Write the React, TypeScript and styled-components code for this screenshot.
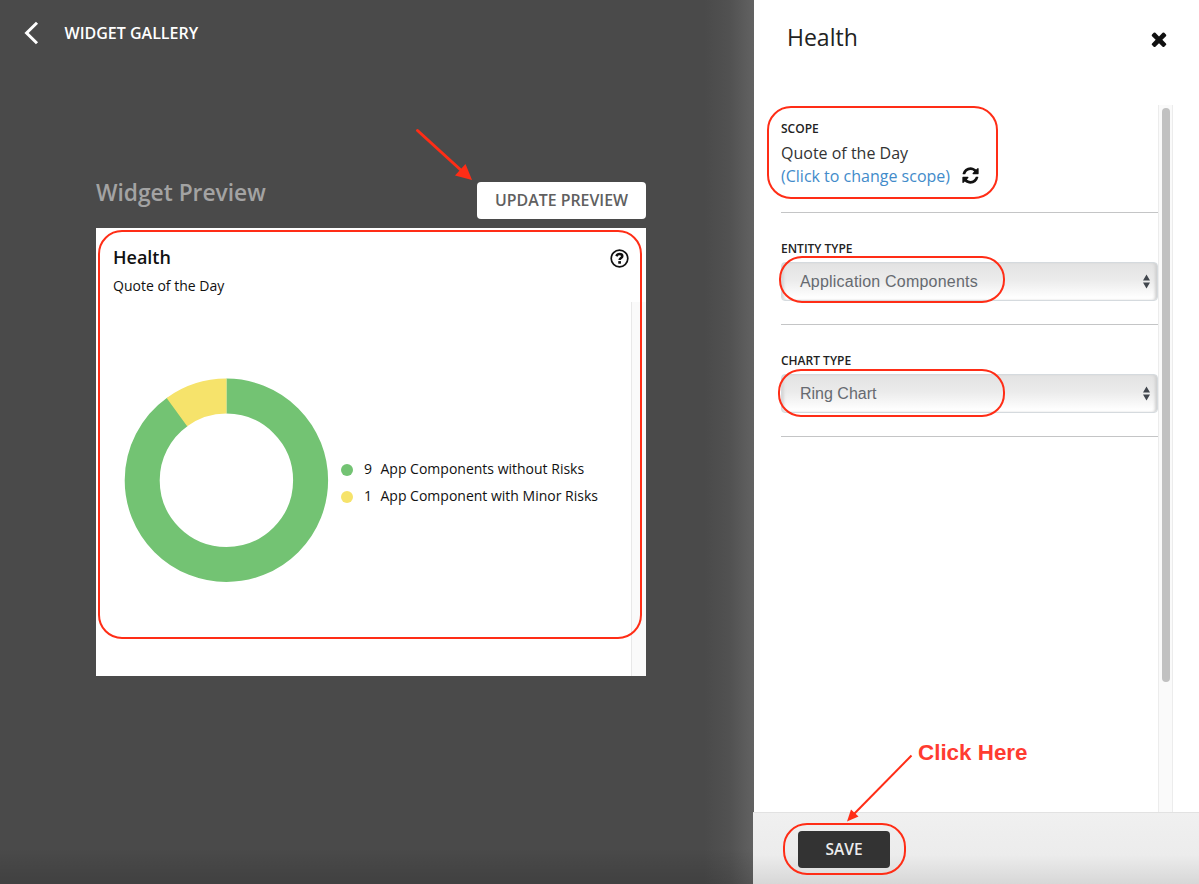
import React from "react";
import styled, { createGlobalStyle } from "styled-components";

const RED = "#ff2d16";

const Global = createGlobalStyle`
  *, *::before, *::after { box-sizing: border-box; }
  body { margin: 0; font-family: "Open Sans", "Noto Sans", sans-serif; color: #111; }
  button { font-family: inherit; cursor: pointer; }
`;

const Page = styled.div`
  position: relative;
  display: flex;
  width: 1199px;
  height: 884px;
  overflow: hidden;
  background: #4a4a4a;
`;

const Stage = styled.main`
  width: 754px;
  height: 884px;
  background:
    linear-gradient(rgba(0, 0, 0, 0) 848px, rgba(0, 0, 0, 0.13) 884px),
    linear-gradient(to right, rgba(104, 104, 104, 0) 704px, rgba(104, 104, 104, 0.25) 730px, rgba(104, 104, 104, 0.8) 754px),
    #4a4a4a;
`;

const TopBar = styled.header`
  display: flex;
  align-items: center;
  height: 66px;
  padding-left: 24px;
`;

const TopTitle = styled.h1`
  margin: 0 0 0 25.5px;
  color: #fff;
  font-size: 16px;
  font-weight: 600;
  line-height: 22px;
  white-space: nowrap;
`;

const Preview = styled.section`
  width: 550px;
  margin: 116px 0 0 96px;
`;

const PreviewHead = styled.div`
  display: flex;
  justify-content: space-between;
  height: 46px;
`;

const PreviewTitle = styled.h2`
  margin: 0;
  color: #a3a3a3;
  font-size: 22.75px;
  font-weight: 600;
  line-height: 22px;
  white-space: nowrap;
`;

const UpdateButton = styled.button`
  width: 169px;
  height: 37px;
  padding: 0 0 2px;
  border: 0;
  border-radius: 4px;
  background: #fff;
  color: #606060;
  font-size: 15.9px;
  font-weight: 600;
  white-space: nowrap;
`;

const Card = styled.article`
  display: flex;
  flex-direction: column;
  height: 448px;
  background: #fff;
`;

const CardHead = styled.div`
  display: flex;
  justify-content: space-between;
  height: 74px;
  padding: 16px 17px 0;
`;

const CardTitle = styled.h3`
  margin: 0;
  font-size: 18px;
  font-weight: 600;
  line-height: 26px;
`;

const CardSubtitle = styled.div`
  margin-top: 6px;
  font-size: 14px;
  line-height: 20px;
`;

const HelpIcon = styled.svg`
  margin-top: 5px;
`;

const CardBody = styled.div`
  display: flex;
  flex: 1;
`;

const ChartArea = styled.div`
  display: flex;
  flex: 1;
  align-items: flex-start;
  padding: 76px 0 0 28px;
`;

const Legend = styled.ul`
  margin: 77px 0 0 11px;
  padding: 0;
  list-style: none;
`;

const LegendRow = styled.li`
  display: flex;
  align-items: center;
  height: 27px;
  font-size: 14px;
  white-space: nowrap;
`;

const Dot = styled.span<{ $color: string }>`
  width: 12px;
  height: 12px;
  margin: 2px 11px 0 1px;
  border-radius: 50%;
  background: ${(p) => p.$color};
`;

const Count = styled.span`
  width: 16.5px;
`;

const CardTrack = styled.div`
  width: 15px;
  border-left: 1px solid #e8e8e8;
  background: #fafafa;
`;

const Panel = styled.aside`
  display: flex;
  flex-direction: column;
  width: 445px;
  height: 884px;
  background: #fff;
`;

const PanelHead = styled.div`
  display: flex;
  justify-content: space-between;
  height: 105px;
  padding: 21px 29px 0 33px;
`;

const PanelTitle = styled.h2`
  margin: 0;
  color: #222;
  font-size: 23px;
  font-weight: 400;
  line-height: 32px;
`;

const CloseIcon = styled.svg`
  margin-top: 6.5px;
`;

const PanelBody = styled.div`
  display: flex;
  flex: 1;
  padding: 0 26px 0 27px;
`;

const Form = styled.div`
  flex: 1;
`;

const Group = styled.section<{ $height: number; $top: number }>`
  height: ${(p) => p.$height}px;
  padding-top: ${(p) => p.$top}px;
  border-bottom: 1px solid #c4c5c6;
`;

const Label = styled.div`
  color: #222;
  font-size: 12px;
  font-weight: 600;
  line-height: 16px;
`;

const ScopeName = styled.div`
  margin-top: 5px;
  color: #333;
  font-size: 16px;
  line-height: 23px;
`;

const ScopeLink = styled.a`
  display: flex;
  align-items: center;
  gap: 11px;
  height: 22px;
  color: #428bca;
  font-size: 16px;
  white-space: nowrap;
`;

const RefreshIcon = styled.svg`
  margin-bottom: 2px;
`;

const SelectBox = styled.div`
  display: flex;
  align-items: center;
  justify-content: space-between;
  height: 39px;
  margin-top: 5px;
  padding: 0 7px 0 18px;
  border: 1px solid #d5dade;
  border-radius: 4px;
  background: linear-gradient(#e3e3e3, #ebebeb 45%, #fff 95%);
  box-shadow: inset -3px 0 3px -1px #cfcfcf, inset 3px 0 3px -1px #d6d6d6;
  color: #666a70;
  font-family: "Liberation Sans", Arial, sans-serif;
  font-size: 16px;
`;

const SelectText = styled.span<{ $spacing: number }>`
  letter-spacing: ${(p) => p.$spacing}px;
`;

const Track = styled.div`
  width: 15px;
  padding: 3px 3px 0 3px;
  border: solid #ececec;
  border-width: 0 1px;
  background: #fafafa;
`;

const Thumb = styled.div`
  width: 8px;
  height: 574px;
  border-radius: 4px;
  background: #c1c1c1;
`;

const Footer = styled.footer`
  height: 72px;
  margin-left: -1px;
  padding: 18px 0 0 45px;
  border-top: 1px solid #e2e2e2;
  background: linear-gradient(#f0f0f0 0, #ececec 42px, #d7d7d7 100%);
`;

const SaveButton = styled.button`
  display: block;
  width: 92px;
  height: 37px;
  padding: 0 0 2px;
  border: 0;
  border-radius: 4px;
  background: #333;
  color: #ececec;
  font-size: 15.5px;
  font-weight: 600;
`;

const Outline = styled.div<{ $x: number; $y: number; $w: number; $h: number; $r: number }>`
  position: absolute;
  left: ${(p) => p.$x}px;
  top: ${(p) => p.$y}px;
  width: ${(p) => p.$w}px;
  height: ${(p) => p.$h}px;
  border: 2px solid ${RED};
  border-radius: ${(p) => p.$r}px;
  pointer-events: none;
`;

const Arrows = styled.svg`
  position: absolute;
  left: 0;
  top: 0;
  pointer-events: none;
`;

const Callout = styled.div`
  position: absolute;
  left: 918px;
  top: 739px;
  color: #ff3b30;
  font-family: "Liberation Sans", Arial, sans-serif;
  font-size: 22.4px;
  font-weight: 700;
  line-height: 28px;
  white-space: nowrap;
`;

const items = [
  { color: "#73c373", count: 9, label: "App Components without Risks" },
  { color: "#f6e36b", count: 1, label: "App Component with Minor Risks" },
];

function Ring() {
  const total = items.reduce((sum, i) => sum + i.count, 0);
  const radius = 84.2;
  const length = 2 * Math.PI * radius;
  let start = 0;
  return (
    <svg width="205" height="205" viewBox="-102.4 -102.3 205 205">
      {items.map((i) => {
        const part = i.count / total;
        const turn = start * 360 - 90;
        start += part;
        return (
          <circle key={i.label} r={radius} fill="none" stroke={i.color} strokeWidth="35"
            strokeDasharray={`${part * length} ${length}`} transform={`rotate(${turn})`} />
        );
      })}
    </svg>
  );
}

function Select({ value, spacing = 0 }: { value: string; spacing?: number }) {
  return (
    <SelectBox>
      <SelectText $spacing={spacing}>{value}</SelectText>
      <svg width="7" height="15" viewBox="0 0 7 15" fill="#41464d">
        <path d="M3.5 0.5 7 6.5H0zM3.5 14.5 0 8.5h7z" />
      </svg>
    </SelectBox>
  );
}

export default function App() {
  return (
    <>
      <Global />
      <Page>
        <Stage>
          <TopBar>
            <svg width="15" height="24" viewBox="0 0 15 24" fill="none" stroke="#fff" strokeWidth="3">
              <path d="M13 1.8 2.6 12 13 22.2" />
            </svg>
            <TopTitle>WIDGET GALLERY</TopTitle>
          </TopBar>
          <Preview>
            <PreviewHead>
              <PreviewTitle>Widget Preview</PreviewTitle>
              <UpdateButton>UPDATE PREVIEW</UpdateButton>
            </PreviewHead>
            <Card>
              <CardHead>
                <div>
                  <CardTitle>Health</CardTitle>
                  <CardSubtitle>Quote of the Day</CardSubtitle>
                </div>
                <HelpIcon width="19" height="19" viewBox="0 0 19 19" fill="none" stroke="#111">
                  <circle cx="9.5" cy="9.5" r="8.3" strokeWidth="1.7" />
                  <path d="M6.4 7.2C7 5.8 8.1 5.1 9.5 5.1c1.6 0 2.8.9 2.8 2.1 0 1.8-2.7 1.8-2.7 3.9" strokeWidth="2.5" />
                  <path d="M9.6 12.1v2.6" strokeWidth="2.7" />
                </HelpIcon>
              </CardHead>
              <CardBody>
                <ChartArea>
                  <Ring />
                  <Legend>
                    {items.map((i) => (
                      <LegendRow key={i.label}>
                        <Dot $color={i.color} />
                        <Count>{i.count}</Count>
                        <span>{i.label}</span>
                      </LegendRow>
                    ))}
                  </Legend>
                </ChartArea>
                <CardTrack />
              </CardBody>
            </Card>
          </Preview>
        </Stage>

        <Panel>
          <PanelHead>
            <PanelTitle>Health</PanelTitle>
            <CloseIcon width="22" height="22" viewBox="0 0 1792 1792" fill="#111">
              <path d="M1490 1322q0 40-28 68l-136 136q-28 28-68 28t-68-28l-294-294-294 294q-28 28-68 28t-68-28l-136-136q-28-28-28-68t28-68l294-294-294-294q-28-28-28-68t28-68l136-136q28-28 68-28t68 28l294 294 294-294q28-28 68-28t68 28l136 136q28 28 28 68t-28 68l-294 294 294 294q28 28 28 68z" />
            </CloseIcon>
          </PanelHead>
          <PanelBody>
            <Form>
              <Group $height={108} $top={16}>
                <Label>SCOPE</Label>
                <ScopeName>Quote of the Day</ScopeName>
                <ScopeLink>
                  <span>(Click to change scope)</span>
                  <RefreshIcon width="19" height="19" viewBox="0 0 1792 1792" fill="#111">
                    <path d="M1639 1056q0 5-1 7-64 268-268 434.5t-478 166.5q-146 0-282.5-55t-243.5-157l-129 129q-19 19-45 19t-45-19-19-45v-448q0-26 19-45t45-19h448q26 0 45 19t19 45-19 45l-137 137q71 66 161 102t187 36q134 0 250-65t186-179q11-17 53-117 8-23 30-23h192q13 0 22.5 9.5t9.5 22.5zm25-800v448q0 26-19 45t-45 19h-448q-26 0-45-19t-19-45 19-45l138-138q-148-137-349-137-134 0-250 65t-186 179q-11 17-53 117-8 23-30 23h-199q-13 0-22.5-9.5t-9.5-22.5v-7q65-268 270-434.5t480-166.5q146 0 284 55.5t245 156.5l130-129q19-19 45-19t45 19 19 45z" />
                  </RefreshIcon>
                </ScopeLink>
              </Group>
              <Group $height={112} $top={28}>
                <Label>ENTITY TYPE</Label>
                <Select value="Application Components" spacing={0.2} />
              </Group>
              <Group $height={112} $top={28}>
                <Label>CHART TYPE</Label>
                <Select value="Ring Chart" />
              </Group>
            </Form>
            <Track>
              <Thumb />
            </Track>
          </PanelBody>
          <Footer>
            <SaveButton>SAVE</SaveButton>
          </Footer>
        </Panel>

        <Outline $x={98} $y={230} $w={544} $h={409} $r={24} />
        <Outline $x={767} $y={106} $w={231} $h={93} $r={24} />
        <Outline $x={779} $y={256} $w={226} $h={47} $r={23} />
        <Outline $x={778} $y={369} $w={227} $h={48} $r={23} />
        <Outline $x={783} $y={823} $w={123} $h={52} $r={24} />
        <Arrows width="1199" height="884" viewBox="0 0 1199 884">
          <path d="M417.5 130.5 463 172" stroke={RED} strokeWidth="3" strokeLinecap="round" />
          <path d="M472 180 455 175.5 465.5 164z" fill={RED} />
          <path d="M911.5 755.5 854 814" stroke={RED} strokeWidth="2" />
          <path d="M847 821.5 851 809.5 858.5 816.5z" fill={RED} />
        </Arrows>
        <Callout>Click Here</Callout>
      </Page>
    </>
  );
}
